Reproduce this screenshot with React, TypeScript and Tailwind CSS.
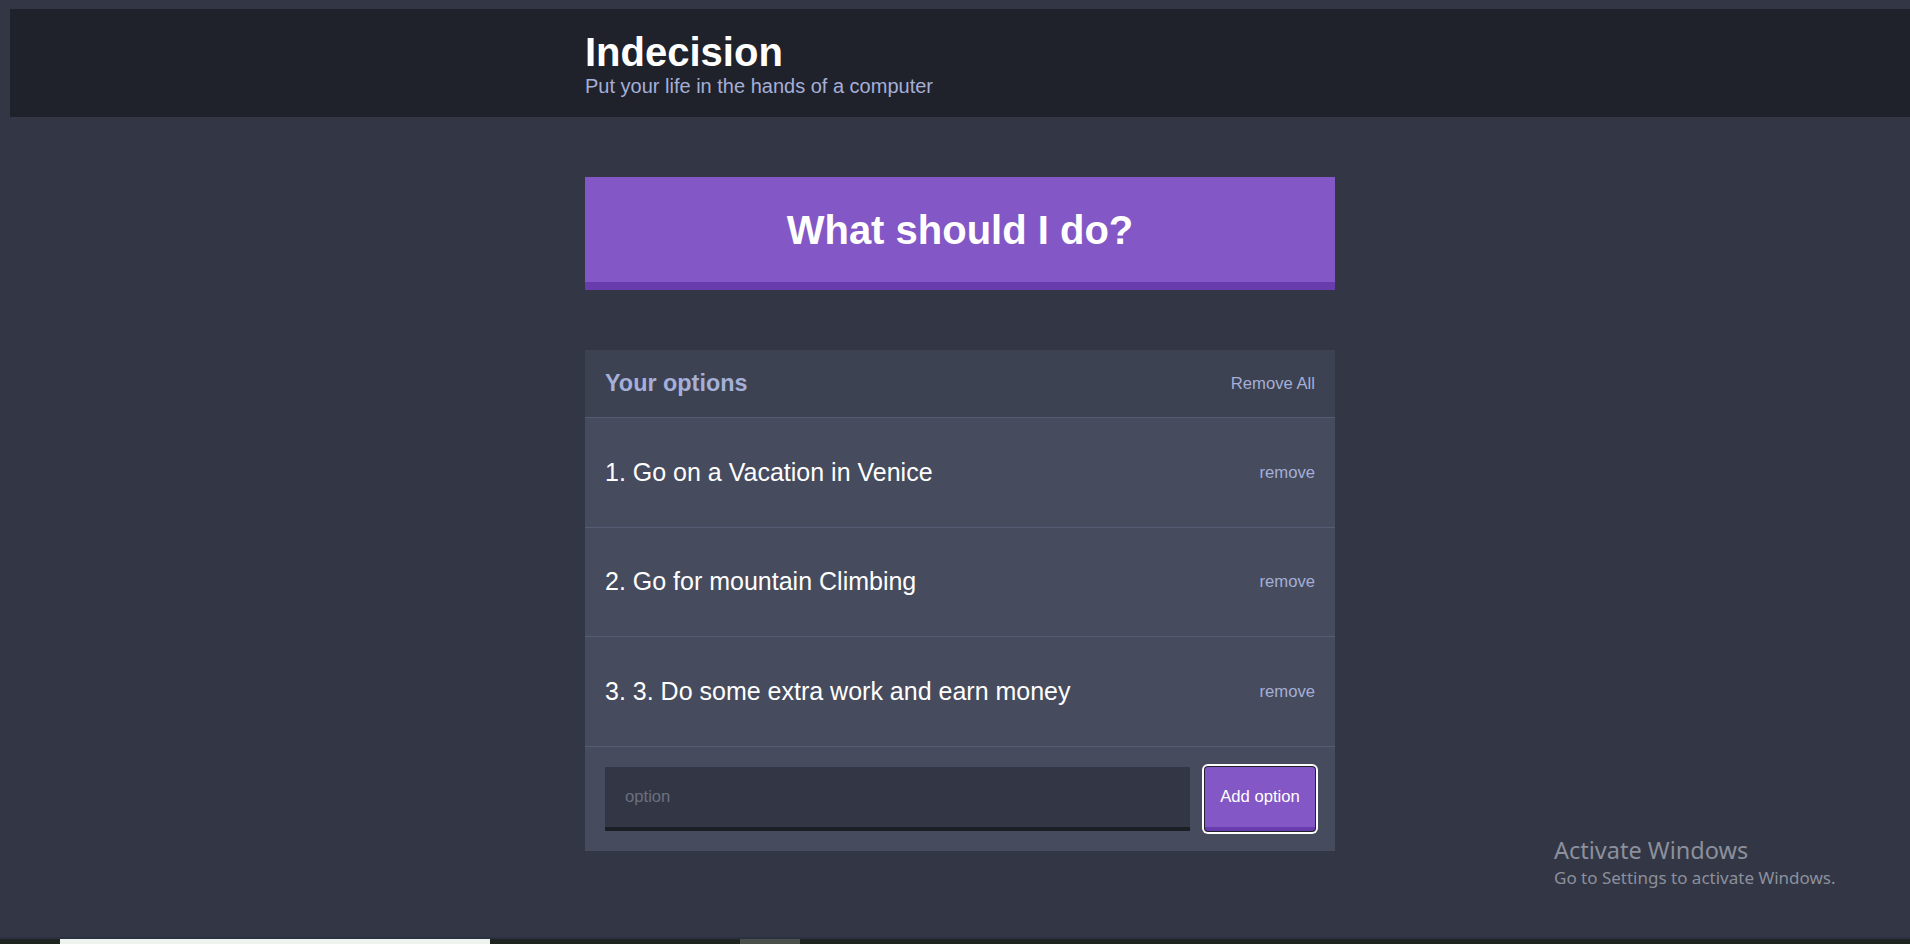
import React from "react";

const App = () => {
  const options = [
    "Go on a Vacation in Venice",
    "Go for mountain Climbing",
    "3. Do some extra work and earn money",
  ];

  return (
    <div className="relative min-h-screen h-[944px] overflow-hidden bg-[#333745] flex flex-col font-['Liberation_Sans',Arial,sans-serif]">
      <div className="flex-1 pl-[10px] pt-[9px]">
        {/* header */}
        <header className="bg-[#20222b] py-5 mb-[60px]">
          <div className="w-[750px] mx-auto">
            <h1 className="text-white text-[40px] font-bold leading-[46px]">Indecision</h1>
            <h2 className="text-[#a5afd7] text-[20px] leading-[22px]">
              Put your life in the hands of a computer
            </h2>
          </div>
        </header>

        <div className="w-[750px] mx-auto">
          <button className="w-full h-[113px] bg-[#8357c5] border-b-[8px] border-[#693cad] text-white text-[40px] font-bold leading-[46px] mb-[60px]">
            What should I do?
          </button>

          <div className="bg-[#464b5e]">
            <div className="bg-[#3c4251] flex items-center justify-between px-5 h-[68px] border-b border-[#565c74]">
              <h3 className="text-[#a5afd7] text-[23.4px] font-bold">Your options</h3>
              <button className="text-[#a5afd7] text-[16.67px]">Remove All</button>
            </div>

            {options.map((option, index) => (
              <div
                key={index}
                className="flex items-center justify-between px-5 h-[109.5px] border-b border-[#565c74]"
              >
                <p className="text-white text-[25px]">
                  {index + 1}. {option}
                </p>
                <button className="text-[#a5afd7] text-[16.67px]">remove</button>
              </div>
            ))}

            <form className="flex p-5 gap-[15px]" onSubmit={(e) => e.preventDefault()}>
              <input
                type="text"
                placeholder="option"
                className="flex-1 h-[64px] bg-[#333745] border-b-[4px] border-[#1d1f27] px-5 text-[16.67px] text-[#a5afd7] placeholder:text-[#6b6f80] outline-none"
              />
              <button className="w-[110px] h-[64px] bg-[#8357c5] border-b-[4px] border-[#693cad] text-white text-[16.67px] rounded-[3px] shadow-[0_0_0_1px_#20222b,0_0_0_3px_#ffffff]">
                Add option
              </button>
            </form>
          </div>
        </div>
      </div>

      {/* bottom strip */}
      <div className="h-[7px] bg-[#1e2420] border-t-2 border-[#2b3140] flex items-stretch">
        <div className="w-[60px]" />
        <div className="w-[430px] bg-[#eef3ee]" />
        <div className="w-[250px]" />
        <div className="w-[60px] bg-[#4a4f4a]" />
      </div>

      {/* windows watermark */}
      <div className="absolute left-[1554px] top-[834px] font-['Noto_Sans',sans-serif] text-[#8c909c] pointer-events-none">
        <div className="text-[23.5px] leading-[32px]">Activate Windows</div>
        <div className="text-[17px] leading-[24px]">Go to Settings to activate Windows.</div>
      </div>
    </div>
  );
};

export default App;
